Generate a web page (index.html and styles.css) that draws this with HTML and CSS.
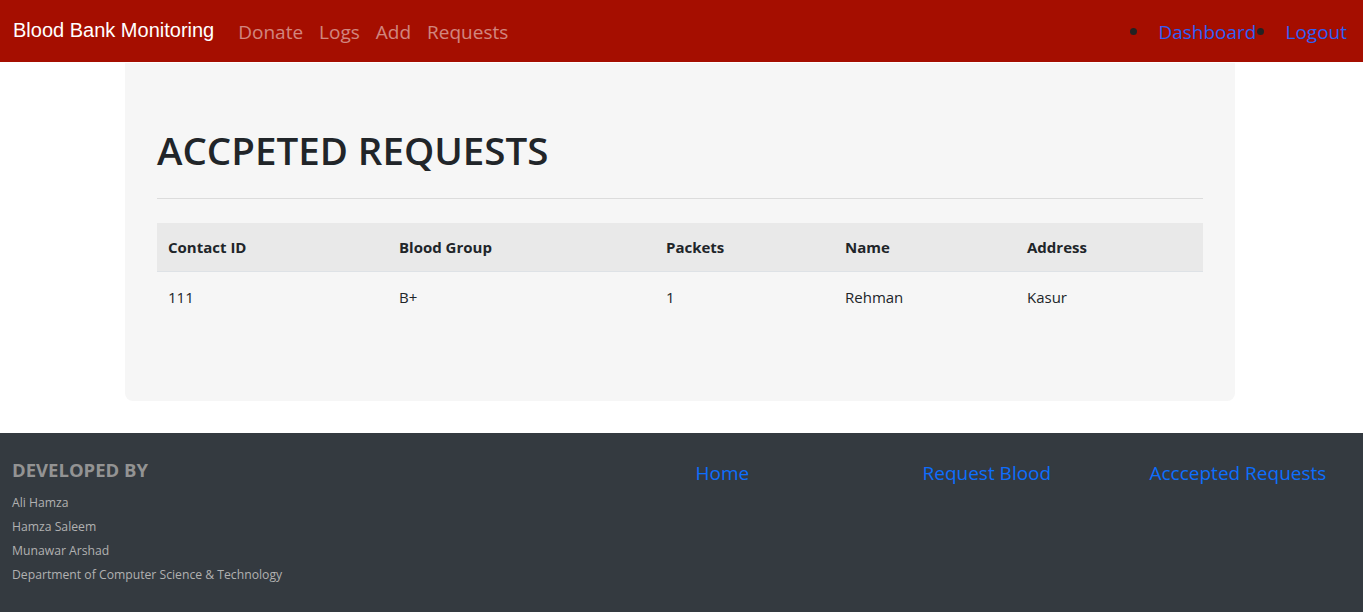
FILE: index.html
```html
<!DOCTYPE html>
<html lang="en">
<head>
<meta charset="utf-8">
<title>Accepted Requests</title>
<link rel="stylesheet" href="styles.css">
</head>
<body>
<nav class="navbar">
  <a class="brand" href="#">Blood Bank Monitoring</a>
  <ul class="nav-left">
    <li><a href="#">Donate</a></li>
    <li><a href="#">Logs</a></li>
    <li><a href="#">Add</a></li>
    <li><a href="#">Requests</a></li>
  </ul>
  <ul class="nav-right">
    <li><a href="#">Dashboard</a></li>
    <li><a href="#">Logout</a></li>
  </ul>
</nav>

<main class="container">
  <section class="jumbo">
    <h1 class="title">ACCPETED REQUESTS</h1>
    <hr class="rule">
    <table class="table">
      <colgroup>
        <col class="c1"><col class="c2"><col class="c3"><col class="c4"><col class="c5">
      </colgroup>
      <thead>
        <tr><th>Contact ID</th><th>Blood Group</th><th>Packets</th><th>Name</th><th>Address</th></tr>
      </thead>
      <tbody>
        <tr><td>111</td><td>B+</td><td>1</td><td>Rehman</td><td>Kasur</td></tr>
      </tbody>
    </table>
  </section>
</main>

<footer class="footer">
  <div class="f-dev">
    <h5 class="f-title">DEVELOPED BY</h5>
    <ul class="f-list">
      <li>Ali Hamza</li>
      <li>Hamza Saleem</li>
      <li>Munawar Arshad</li>
      <li>Department of Computer Science &amp; Technology</li>
    </ul>
  </div>
  <div class="f-col"><a href="#">Home</a></div>
  <div class="f-col"><a href="#">Request Blood</a></div>
  <div class="f-col"><a href="#">Acccepted Requests</a></div>
</footer>
</body>
</html>
```

FILE: styles.css
```css
* { box-sizing: border-box; }
body {
  margin: 0;
  font-family: "Open Sans", "Noto Sans", sans-serif;
  font-size: 16px;
  line-height: 1.5;
  color: #212529;
  background: #fff;
}
a { text-decoration: none; }

.navbar {
  height: 62px;
  background: #a50e00;
  display: flex;
  align-items: center;
  padding: 2px 16px 0 13px;
}
.brand {
  font-family: "Liberation Sans", Arial, sans-serif;
  font-size: 20px;
  color: #fff;
  margin-right: 16px;
  position: relative;
  top: -2px;
}
.nav-left {
  display: flex;
  list-style: none;
  margin: 0;
  padding: 0;
}
.nav-left a {
  display: block;
  padding: 0 8px;
  font-size: 19px;
  color: rgba(255,255,255,0.5);
}
.nav-right {
  display: flex;
  margin: 0 0 0 auto;
  padding: 0;
  list-style: none;
}
.nav-right li {
  position: relative;
  margin-left: 29px;
}
.nav-right li::before {
  content: "";
  position: absolute;
  left: -28px;
  top: 50%;
  width: 7px;
  height: 7px;
  margin-top: -4px;
  border-radius: 50%;
  background: #222;
}
.nav-right a {
  display: block;
  font-size: 19px;
  color: #2f5ff5;
}

.container {
  width: 1110px;
  margin: 1px 0 0 125px;
}
.jumbo {
  background: #f6f6f6;
  border-radius: 0 0 8px 8px;
  padding: 63px 32px 63px;
}
.title {
  margin: 0;
  font-size: 38.5px;
  font-weight: 600;
  line-height: 48px;
  letter-spacing: 0;
}
.rule {
  margin: 24px 0 24px;
  border: 0;
  border-top: 1px solid #dcdcdc;
}
.table {
  width: 100%;
  border-collapse: collapse;
  margin-bottom: 16px;
  font-size: 15px;
}
.c1 { width: 231px; }
.c2 { width: 267px; }
.c3 { width: 179px; }
.c4 { width: 182px; }
.table th, .table td {
  text-align: left;
  padding: 12px 12px 12px 11px;
  line-height: 24px;
}
.table thead th {
  background: #e9e9e9;
  font-weight: 700;
  border-bottom: 1px solid #dee2e6;
}
.table tbody td { padding-top: 13px; padding-bottom: 13px; }

.footer {
  margin-top: 32px;
  background: #343a40;
  display: grid;
  grid-template-columns: 683.5px 227px 227px 227px;
  padding: 24px 0 22px;
  min-height: 179px;
}
.f-dev { padding-left: 12px; }
.f-title {
  margin: 0 0 8px;
  font-size: 18.5px;
  font-weight: 700;
  line-height: 26px;
  color: #939393;
}
.f-list {
  list-style: none;
  margin: 0;
  padding: 0;
  font-size: 12.2px;
  line-height: 24px;
  color: #b1b1b1;
}
.f-col { padding-left: 12px; padding-top: 0; }
.f-col a {
  font-size: 19px;
  line-height: 32px;
  color: #0d6efd;
}
```
